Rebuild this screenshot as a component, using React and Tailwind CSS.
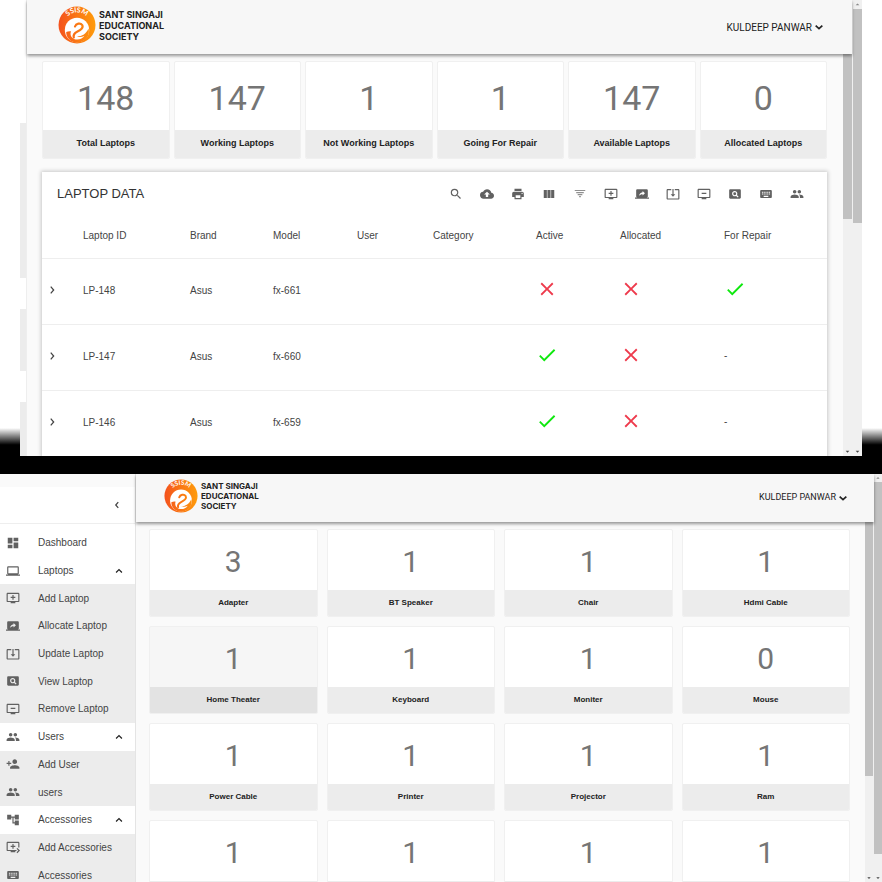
import React from "react";
import {
  MdSearch, MdBackup, MdPrint, MdViewColumn, MdAddToQueue, MdScreenShare,
  MdSystemUpdateAlt, MdRemoveFromQueue, MdPageview, MdKeyboard, MdPeople, MdClose, MdCheck,
  MdDashboard, MdLaptop, MdPersonAdd, MdAccountTree, MdQueuePlayNext,
  MdArrowDropUp, MdArrowDropDown,
} from "react-icons/md";

function FilterIcon({ className }) {
  return (
    <svg viewBox="0 0 24 24" fill="currentColor" className={className} aria-hidden="true">
      <path opacity="0.7" d="M3 5h18v2H3zM5.500 8.500h13v2h-13zM8 12h8v2H8zM10.500 15.500h3v2h-3z" />
    </svg>
  );
}

const chevrons = {
  up: "M5 15.500l7-7 7 7",
  down: "M4 8.500l8 7.500 8-7.500",
  left: "M15 5l-6 7 6 7",
  right: "M9 4l7 8-7 8",
};

function Chevron({ to, className, weight = 3 }) {
  return (
    <svg viewBox="0 0 24 24" fill="none" stroke="currentColor" strokeWidth={weight} className={className} aria-hidden="true">
      <path d={chevrons[to]} />
    </svg>
  );
}

function Logo({ large }) {
  const id = large ? "logoLarge" : "logoSmall";
  return (
    <a href="#home" className="flex items-center gap-[3px]">
      <svg viewBox="0 0 38 38" className={large ? "size-[38px]" : "size-[34px]"} aria-hidden="true">
        <defs>
          <linearGradient id={id} gradientUnits="userSpaceOnUse" x1="0" y1="0" x2="38" y2="0">
            <stop offset="0" stopColor="#f4511e" />
            <stop offset="1" stopColor="#ff9d0a" />
          </linearGradient>
          <path id={id + "Arc"} d="M7.500 14A12.500 12.500 0 0 1 30.500 14" />
        </defs>
        <circle cx="19" cy="19" r="18.500" fill={`url(#${id})`} />
        <circle cx="19" cy="24" r="12.200" fill="#fff" />
        <path
          d="M17 20.500C18 17.500 22.500 16.500 24.200 19C25.800 22 22.500 24 19.500 25.500C16 27.300 15 29 15.800 31.500"
          fill="none" stroke={`url(#${id})`} strokeWidth="2.200" strokeLinecap="round"
        />
        <path
          d="M19 30.500C24 30.500 28.500 27.500 30.500 22.500C32.500 29.500 27.500 36.300 19.500 36.500C12.500 36.500 8 31.500 8.200 26C9.500 25.300 11.500 25 13 25.300C11.800 28.500 13 31.500 16 33C20 34.500 24.500 33 26.500 29.800C24 31.200 21.500 31.400 19 30.500Z"
          fill={`url(#${id})`}
        />
        <text fill="#fff" fontSize="7" fontWeight="700" fontFamily="Lato, sans-serif">
          <textPath href={`#${id}Arc`} startOffset="50%" textAnchor="middle">SSISM</textPath>
        </text>
      </svg>
      <span
        className={
          large
            ? "font-[Inter,sans-serif] text-[9px] font-bold leading-[11px] text-[#222]"
            : "font-[Inter,sans-serif] text-[8px] font-bold leading-[10px] text-[#222]"
        }
      >
        SANT SINGAJI<br />EDUCATIONAL<br />SOCIETY
      </span>
    </a>
  );
}

function UserMenu({ large }) {
  return (
    <button
      className={`flex items-center gap-[2px] pt-1 font-[Roboto,sans-serif] text-[#222] ${large ? "text-[10px]" : "text-[9px]"}`}
    >
      KULDEEP PANWAR
      <Chevron to="down" weight={4} className="size-[10px]" />
    </button>
  );
}

function StatCard({ value, label, large, active }) {
  return (
    <button
      className={`flex flex-col overflow-hidden rounded-xs border border-[#f0f0f0] text-center ${active ? "bg-[#f6f6f6]" : "bg-white"} ${large ? "h-[98px]" : "h-[88px]"}`}
    >
      <span
        className={`flex w-full flex-1 items-center justify-center font-[Roboto,sans-serif] text-[#757575] ${large ? "pt-1 text-[34px]" : "pt-[2px] text-[30px]"}`}
      >
        {value}
      </span>
      <span
        className={`flex w-full items-center justify-center font-bold text-[#222] ${active ? "bg-[#e3e3e3]" : "bg-[#ececec]"} ${large ? "h-7 text-[9px]" : "h-[26px] text-[8px]"}`}
      >
        {label}
      </span>
    </button>
  );
}

const laptopStats = [
  ["148", "Total Laptops"], ["147", "Working Laptops"], ["1", "Not Working Laptops"],
  ["1", "Going For Repair"], ["147", "Available Laptops"], ["0", "Allocated Laptops"],
];

const tools = [
  ["Search", MdSearch], ["Export", MdBackup], ["Print", MdPrint], ["Columns", MdViewColumn],
  ["Filter", FilterIcon], ["Add Laptop", MdAddToQueue], ["Allocate Laptop", MdScreenShare],
  ["Update Laptop", MdSystemUpdateAlt], ["Remove Laptop", MdRemoveFromQueue],
  ["View Laptop", MdPageview], ["Accessories", MdKeyboard], ["Users", MdPeople],
];

const laptops = [
  { id: "LP-148", model: "fx-661", active: false, repair: true },
  { id: "LP-147", model: "fx-660", active: true, repair: false },
  { id: "LP-146", model: "fx-659", active: true, repair: false },
];

const accessories = [
  ["3", "Adapter"], ["1", "BT Speaker"], ["1", "Chair"], ["1", "Hdmi Cable"],
  ["1", "Home Theater"], ["1", "Keyboard"], ["1", "Moniter"], ["0", "Mouse"],
  ["1", "Power Cable"], ["1", "Printer"], ["1", "Projector"], ["1", "Ram"],
  ["1", ""], ["1", ""], ["1", ""], ["1", ""],
];

const menu = [
  ["Dashboard", MdDashboard, "top"], ["Laptops", MdLaptop, "group"],
  ["Add Laptop", MdAddToQueue], ["Allocate Laptop", MdScreenShare],
  ["Update Laptop", MdSystemUpdateAlt], ["View Laptop", MdPageview],
  ["Remove Laptop", MdRemoveFromQueue], ["Users", MdPeople, "group"],
  ["Add User", MdPersonAdd], ["users", MdPeople], ["Accessories", MdAccountTree, "group"],
  ["Add Accessories", MdQueuePlayNext], ["Accessories", MdKeyboard],
];

function Mark({ ok }) {
  return ok ? (
    <MdCheck aria-label="Yes" className="size-[22px] text-[#0fe80f]" />
  ) : (
    <MdClose aria-label="No" className="size-[22px] text-[#ee3a4c]" />
  );
}

function LaptopTable() {
  return (
    <section className="mt-[13px] flex-1 bg-white shadow-[0_0_4px_1px_rgba(0,0,0,0.2)]">
      <div className="flex h-[42px] items-center justify-between pl-[15px] pr-[23px] pt-[2px]">
        <h2 className="text-[13px] text-[#333]">LAPTOP DATA</h2>
        <div className="flex gap-[17px]">
          {tools.map(([name, Icon]) => (
            <button key={name} aria-label={name} className="text-[#616161]">
              <Icon className="size-[14px]" />
            </button>
          ))}
        </div>
      </div>
      <table className="w-full table-fixed text-left text-[10px] text-[#444]">
        <colgroup>
          <col className="w-[41px]" />
          <col className="w-[107px]" />
          <col className="w-[83px]" />
          <col className="w-[84px]" />
          <col className="w-[76px]" />
          <col className="w-[103px]" />
          <col className="w-[84px]" />
          <col className="w-[104px]" />
          <col />
        </colgroup>
        <thead>
          <tr className="h-[44px] border-b border-[#eeeeee]">
            <td />
            {["Laptop ID", "Brand", "Model", "User", "Category", "Active", "Allocated", "For Repair"].map((h) => (
              <th key={h} scope="col" className="font-normal">{h}</th>
            ))}
          </tr>
        </thead>
        <tbody>
          {laptops.map((l) => (
            <tr key={l.id} className="h-[66px] border-b border-[#eeeeee]">
              <td className="pb-[2px]">
                <button aria-label={"Expand " + l.id} className="ml-[5px] flex text-[#444]">
                  <Chevron to="right" className="size-[10px]" />
                </button>
              </td>
              <td className="pb-[2px]">{l.id}</td>
              <td className="pb-[2px]">Asus</td>
              <td className="pb-[2px]">{l.model}</td>
              <td />
              <td />
              <td className="pb-1"><Mark ok={l.active} /></td>
              <td className="pb-1"><Mark ok={false} /></td>
              <td className="pb-1">{l.repair ? <Mark ok /> : "-"}</td>
            </tr>
          ))}
        </tbody>
      </table>
    </section>
  );
}

function LaptopScreen() {
  return (
    <div className="relative flex h-[456px] shrink-0 px-5">
      <div className="absolute inset-x-0 bottom-0 h-7 bg-linear-to-b from-transparent to-black to-60%" />
      <div className="relative flex flex-1 overflow-hidden bg-[#fafafa]">
        <div className="flex w-[6px] flex-col bg-white">
          <div className="mt-[123px] h-[155px] bg-[#ececec]" />
          <div className="mt-[31px] h-[62px] bg-[#ececec]" />
          <div className="mt-[31px] flex-1 bg-[#ececec]" />
        </div>
        <div className="flex min-w-0 flex-1 flex-col border-l border-[#eeeeee]">
          <header className="z-10 flex h-[54px] shrink-0 items-center justify-between bg-[#f7f7f7] pb-1 pl-[31px] pr-7 shadow-[0_2px_3px_rgba(0,0,0,0.4)]">
            <Logo large />
            <UserMenu large />
          </header>
          <div className="flex min-h-0 flex-1">
            <main className="flex min-w-0 flex-1 flex-col pl-[15px] pr-4 pt-[7px]">
              <div className="grid grid-cols-6 gap-1">
                {laptopStats.map(([v, l]) => <StatCard key={l} value={v} label={l} large />)}
              </div>
              <LaptopTable />
            </main>
            <div className="flex w-[9px] flex-col bg-[#f0f0f0]">
              <div className="h-[165px] bg-[#c1c1c1]" />
              <MdArrowDropDown className="mt-auto size-[9px] text-[#444]" />
            </div>
          </div>
        </div>
        <div className="flex w-[10px] flex-col bg-[#f0f0f0] pl-px">
          <MdArrowDropUp className="size-[9px] text-[#888]" />
          <div className="h-[214px] bg-[#c1c1c1]" />
          <MdArrowDropDown className="mt-auto size-[9px] text-[#444]" />
        </div>
      </div>
    </div>
  );
}

function Sidebar() {
  return (
    <nav className="flex w-[135px] shrink-0 flex-col bg-white">
      <div className="h-[13px] shrink-0 bg-[#fafafa]" />
      <div className="flex h-[37px] shrink-0 items-center justify-end border-b border-[#eeeeee] pr-[13px]">
        <button aria-label="Collapse menu" className="text-[#444]"><Chevron to="left" className="size-[10px]" /></button>
      </div>
      <ul className="mt-[5px] grid h-[360px] shrink-0 auto-rows-fr">
        {menu.map(([name, Icon, kind], i) => (
          <li key={i} className={kind ? "flex bg-white" : "flex bg-[#ececec]"}>
            <a href="#menu" className="flex flex-1 items-center pl-[6px] pr-[11px] text-[10px] text-[#444]">
              <Icon className="mr-[18px] size-[14px] text-[#616161]" />
              <span className="flex-1">{name}</span>
              {kind === "group" && <Chevron to="up" className="size-[10px] text-[#222]" />}
            </a>
          </li>
        ))}
      </ul>
    </nav>
  );
}

function AccessoriesScreen() {
  return (
    <div className="flex min-h-0 flex-1 bg-[#fafafa]">
      <Sidebar />
      <div className="flex min-w-0 flex-1 flex-col border-l border-[#e4e4e4]">
        <header className="z-10 flex h-12 shrink-0 items-center justify-between bg-[#f7f7f7] pb-1 pl-7 pr-[26px] shadow-[0_2px_3px_rgba(0,0,0,0.4)]">
          <Logo />
          <UserMenu />
        </header>
        <div className="flex min-h-0 flex-1">
          <main className="min-w-0 flex-1 overflow-hidden pl-[13px] pr-[15px] pt-[7px]">
            <div className="grid grid-cols-4 gap-[9px]">
              {accessories.map(([v, l], i) => <StatCard key={i} value={v} label={l} active={l === "Home Theater"} />)}
            </div>
          </main>
          <div className="flex w-[9px] flex-col bg-[#f0f0f0] pr-px">
            <div className="h-[254px] bg-[#c1c1c1]" />
            <MdArrowDropDown className="mt-auto size-2 text-[#444]" />
          </div>
        </div>
      </div>
      <div className="flex w-2 flex-col bg-[#f0f0f0]">
        <MdArrowDropUp className="size-2 text-[#888]" />
        <div className="h-[372px] bg-[#c1c1c1]" />
        <MdArrowDropDown className="mt-auto size-2 text-[#444]" />
      </div>
    </div>
  );
}

export default function App() {
  return (
    <div className="flex h-screen flex-col overflow-hidden bg-white font-['Liberation_Sans',Arial,sans-serif]">
      <LaptopScreen />
      <div className="h-[18px] shrink-0 bg-black" />
      <AccessoriesScreen />
    </div>
  );
}
